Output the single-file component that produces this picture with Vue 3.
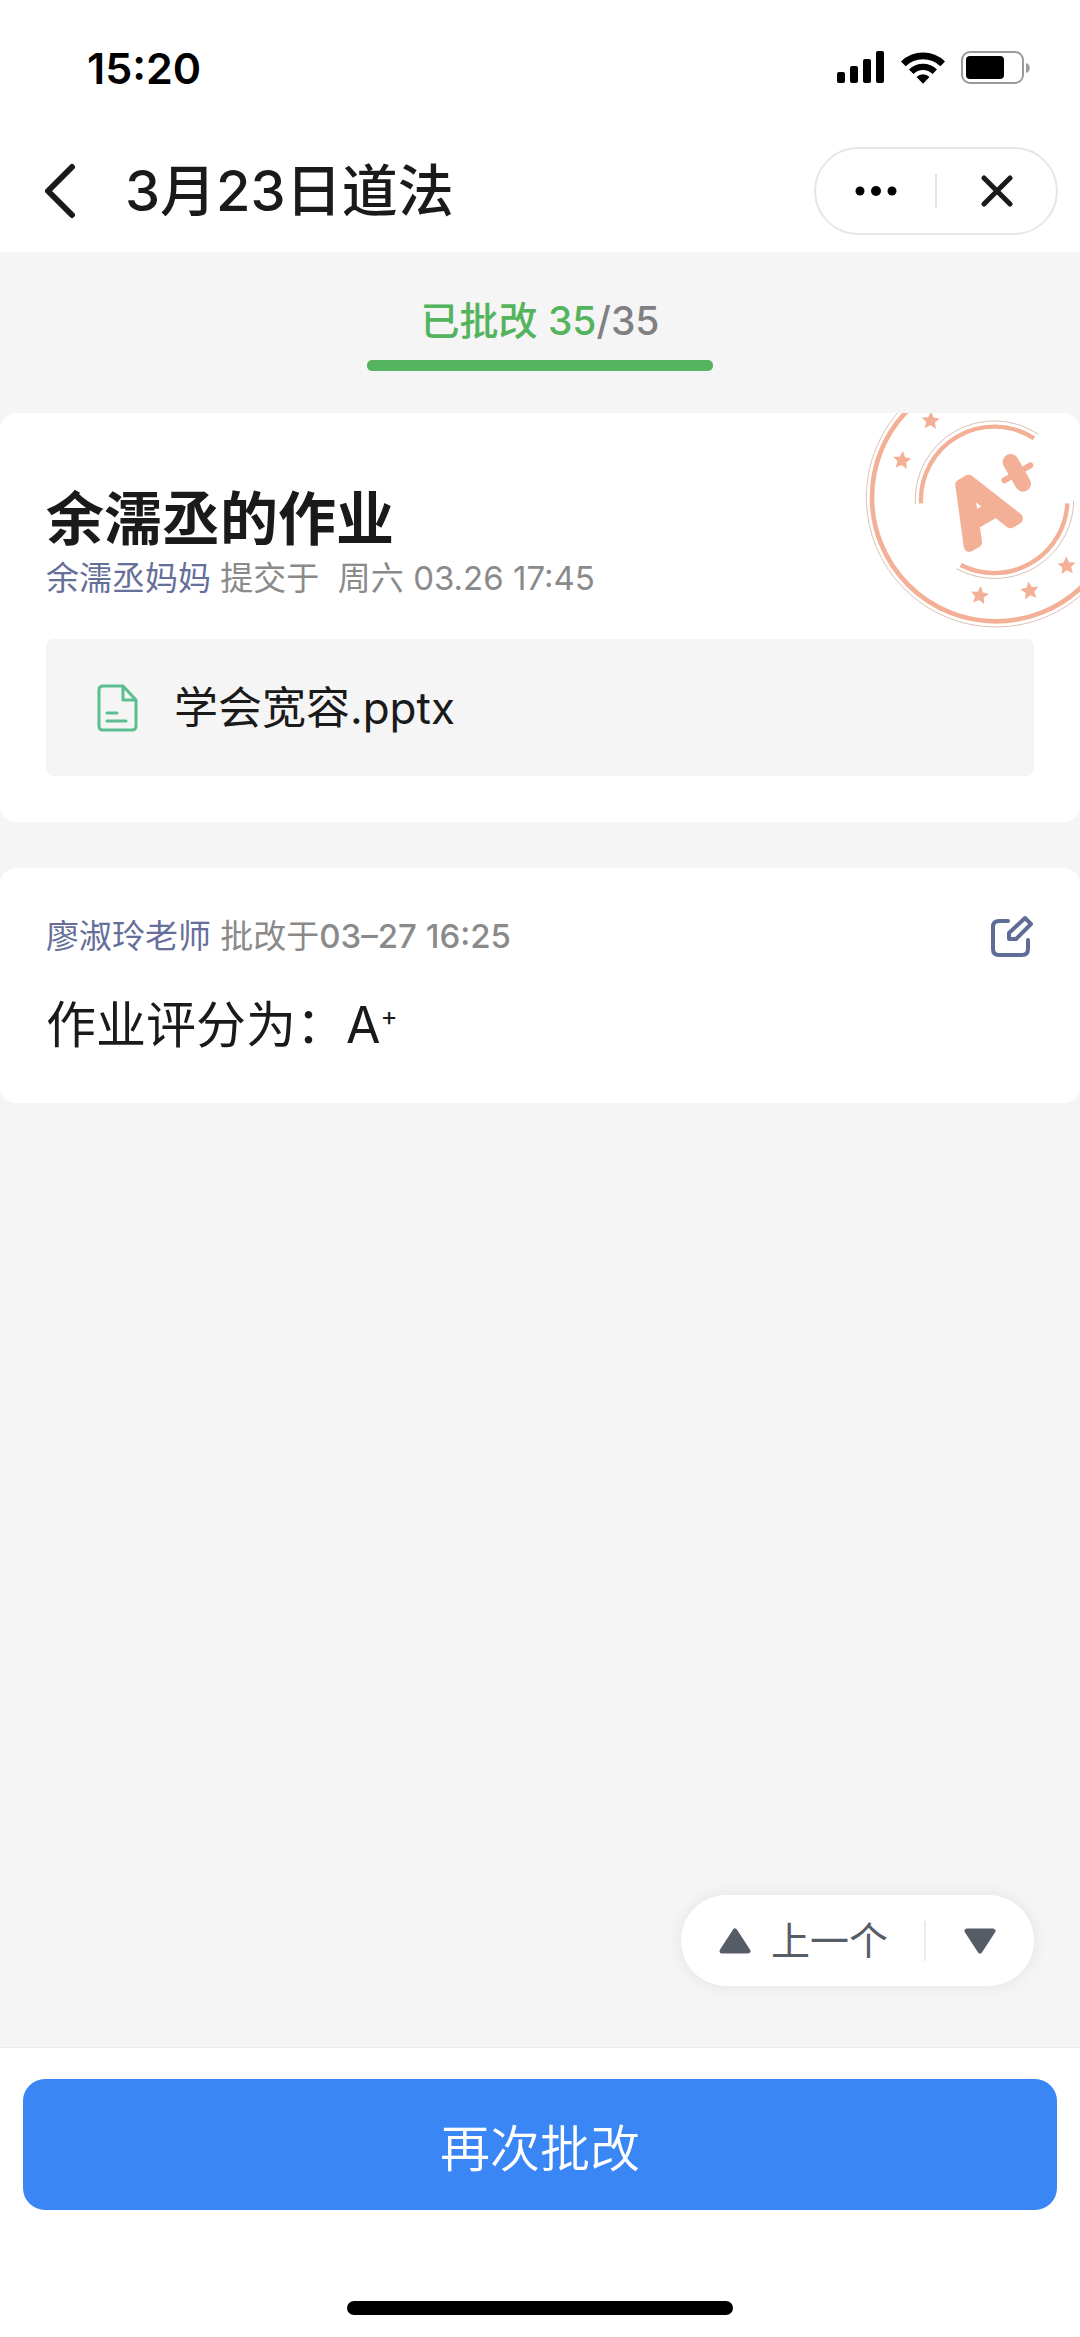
<script setup>
import { ref } from 'vue'

const graded = ref(35)
const total = ref(35)

const stars = [
  { x: 272, y: 92, r: 3 },
  { x: 186, y: 211, r: 6 },
  { x: 419, y: 616, r: 8 },
  { x: 569, y: 602, r: -8 },
  { x: 680, y: 527, r: -4 },
]
</script>

<template>
  <div class="page">
    <header class="top">
      <div class="status">
        <span class="clock">15:20</span>
        <div class="status-icons">
          <svg width="48" height="34" viewBox="0 0 48 34" aria-hidden="true">
            <rect x="0" y="21" width="8" height="11" rx="2" />
            <rect x="13" y="15" width="8" height="17" rx="2" />
            <rect x="26" y="8" width="8" height="24" rx="2" />
            <rect x="39" y="0" width="8" height="32" rx="2" />
          </svg>
          <svg width="46" height="34" viewBox="0 0 46 34" aria-hidden="true">
            <path d="M1 10.500A31.500 31.500 0 0 1 45 10.500L40.300 15.200A25 25 0 0 0 5.700 15.200Z" />
            <path d="M9 18.500A20 20 0 0 1 37 18.500L32.500 23A13.500 13.500 0 0 0 13.500 23Z" />
            <path d="M16.500 26A9.200 9.200 0 0 1 29.500 26L23 32.700Z" />
          </svg>
          <svg width="70" height="34" viewBox="0 0 70 34" aria-hidden="true">
            <rect x="1" y="1" width="61" height="31" rx="8" fill="none" stroke="#9b9b9b" stroke-width="2" />
            <rect x="5" y="5" width="38" height="23" rx="4" />
            <path d="M65 12C70 13 70 21 65 22Z" fill="#9b9b9b" />
          </svg>
        </div>
      </div>
      <div class="nav">
        <button class="back" type="button" aria-label="返回">
          <svg width="32" height="56" viewBox="0 0 32 56" aria-hidden="true">
            <path d="M28 4L4 28L28 52" fill="none" stroke="#1a1a1a" stroke-width="6" stroke-linecap="round" stroke-linejoin="round" />
          </svg>
        </button>
        <h1 class="nav-title">3月23日道法</h1>
        <div class="capsule">
          <button type="button" aria-label="更多">
            <svg width="42" height="12" viewBox="0 0 42 12" aria-hidden="true">
              <circle cx="5" cy="6" r="4.500" />
              <circle cx="21" cy="6" r="5" />
              <circle cx="37" cy="6" r="4.500" />
            </svg>
          </button>
          <button type="button" aria-label="关闭">
            <svg width="32" height="32" viewBox="0 0 32 32" aria-hidden="true">
              <path d="M3 3L29 29M29 3L3 29" fill="none" stroke="#1a1a1a" stroke-width="5" stroke-linecap="round" />
            </svg>
          </button>
        </div>
      </div>
    </header>

    <main class="content">
      <section class="progress">
        <p class="progress-text"><span class="done">已批改 {{ graded }}</span>/{{ total }}</p>
        <div class="bar"><div class="bar-fill" :style="{ width: (graded / total) * 100 + '%' }"></div></div>
      </section>

      <section class="card">
        <svg class="stamp" viewBox="72 69 648 648" aria-hidden="true">
          <g fill="none" stroke="#f3b097">
            <circle cx="468" cy="322" r="389" stroke-width="3" stroke="#e3bfb2" />
            <circle cx="468" cy="322" r="372" stroke-width="14" />
            <path d="M226 342A237 237 0 0 1 595 133" stroke-width="3" stroke="#dcbdb2" />
            <path d="M243 340A220 220 0 0 1 582 145" stroke-width="13" />
            <path d="M701 333A237 237 0 0 1 350 536" stroke-width="3" stroke="#dcbdb2" />
            <path d="M682 340A220 220 0 0 1 362 525" stroke-width="13" />
            <path d="M512 216L549 281" stroke-width="48" stroke-linecap="round" />
            <path d="M493 271L571 226" stroke-width="18" stroke-linecap="round" />
          </g>
          <text class="stamp-grade" transform="translate(460 427) rotate(-30)" text-anchor="middle">A</text>
          <path
            v-for="s in stars"
            :key="s.x"
            fill="#f3b097"
            d="M0-28L8-10L27-8L13 5L17 24L0 14L-17 24L-13 5L-27-8L-8-10Z"
            :transform="`translate(${s.x} ${s.y}) rotate(${s.r})`"
          />
        </svg>
        <h2 class="card-title">余濡丞的作业</h2>
        <p class="meta"><span class="who">余濡丞妈妈</span> 提交于&nbsp; 周六 03.26 17:45</p>
        <a class="file" href="#">
          <svg width="42" height="48" viewBox="0 0 42 48" fill="none" stroke="#5cbd8f" stroke-width="3" stroke-linecap="round" stroke-linejoin="round" aria-hidden="true">
            <path d="M26 2H6Q2 2 2 6V42Q2 46 6 46H35Q39 46 39 42V16L26 2V16H39" />
            <path d="M10 29H20M10 37H29" />
          </svg>
          <span class="file-name">学会宽容.pptx</span>
        </a>
      </section>

      <section class="card">
        <div class="review-head">
          <p class="meta"><span class="who">廖淑玲老师</span> 批改于<time class="strong">03–27 16:25</time></p>
          <button class="edit" type="button" aria-label="编辑">
            <svg width="44" height="44" viewBox="0 0 44 44" fill="none" stroke="#5f6c96" stroke-width="4" stroke-linecap="round" stroke-linejoin="round" aria-hidden="true">
              <path d="M18 7H9Q3 7 3 13V35Q3 41 9 41H32Q38 41 38 35V26" />
              <path d="M35 4L41 10L26 25H19V19Z" />
            </svg>
          </button>
        </div>
        <p class="score">作业评分为：A<sup>+</sup></p>
      </section>

      <div class="pager">
        <button class="prev" type="button">
          <svg width="32" height="26" viewBox="0 0 32 26" aria-hidden="true">
            <path d="M16 3L29 23H3Z" fill="#565d66" stroke="#565d66" stroke-width="5" stroke-linejoin="round" />
          </svg>
          <span class="prev-label">上一个</span>
        </button>
        <button class="next" type="button" aria-label="下一个">
          <svg width="32" height="26" viewBox="0 0 32 26" aria-hidden="true">
            <path d="M16 23L29 3H3Z" fill="#565d66" stroke="#565d66" stroke-width="5" stroke-linejoin="round" />
          </svg>
        </button>
      </div>
    </main>

    <footer class="footer">
      <button class="primary" type="button">再次批改</button>
      <div class="home"></div>
    </footer>
  </div>
</template>

<style>
body {
  margin: 0;
}
</style>

<style scoped>
.page {
  display: flex;
  flex-direction: column;
  min-height: 100vh;
  background: #f5f5f5;
  color: #1a1a1a;
  font-family: Inter, "Noto Sans CJK SC", sans-serif;
}

h1,
h2,
p {
  margin: 0;
}

button {
  display: flex;
  align-items: center;
  justify-content: center;
  margin: 0;
  padding: 0;
  border: 0;
  background: none;
  color: inherit;
  font: inherit;
}

svg {
  display: block;
  flex: none;
}

.top {
  background: #fff;
}

.status {
  display: flex;
  align-items: center;
  justify-content: space-between;
  height: 120px;
  padding: 8px 49px 0 87px;
}

.clock {
  color: #000;
  font-size: 43px;
  font-weight: 600;
}

.status-icons {
  display: flex;
  gap: 15px;
}

.nav {
  display: flex;
  align-items: center;
  height: 122px;
  padding: 2px 22px 0 44px;
}

.nav-title {
  flex: 1;
  margin-left: 49px;
  font-size: 56px;
  font-weight: 500;
  line-height: 64px;
}

.capsule {
  display: flex;
  align-items: center;
  box-sizing: border-box;
  width: 244px;
  height: 88px;
  border: 2px solid #e6e6e6;
  border-radius: 44px;
}

.capsule button {
  flex: 1;
  height: 34px;
}

.capsule button + button {
  border-left: 2px solid #e3e3e3;
}

.content {
  display: flex;
  flex: 1;
  flex-direction: column;
}

.progress {
  display: flex;
  flex-direction: column;
  align-items: center;
  padding: 45px 0 42px;
}

.progress-text {
  color: #808082;
  font-size: 39px;
  font-weight: 500;
  line-height: 48px;
}

.done {
  color: #54b45d;
}

.bar {
  width: 32%;
  height: 11px;
  margin-top: 15px;
}

.bar-fill {
  height: 100%;
  border-radius: 5px;
  background: #54b55e;
}

.card {
  position: relative;
  overflow: hidden;
  padding: 46px;
  border-radius: 16px;
  background: #fff;
}

.card + .card {
  margin-top: 46px;
}

.stamp {
  position: absolute;
  top: 0;
  right: 0;
  width: 216px;
  height: 216px;
}

.stamp-grade {
  fill: #f3b097;
  stroke: #f3b097;
  stroke-width: 34px;
  stroke-linejoin: round;
  font-family: "Liberation Sans", sans-serif;
  font-size: 250px;
}

.card-title {
  margin-top: 28px;
  font-size: 58px;
  font-weight: 700;
  line-height: 64px;
}

.meta {
  color: #8a8a8a;
  font-size: 33px;
  font-weight: 400;
  line-height: 44px;
}

.card-title + .meta {
  margin-top: 5px;
}

.who {
  color: #666f99;
}

.strong {
  font-weight: 500;
}

.file {
  display: flex;
  align-items: center;
  gap: 35px;
  height: 137px;
  margin-top: 39px;
  padding: 0 51px;
  border-radius: 8px;
  background: #f5f5f5;
  color: #1a1a1a;
  font-size: 44px;
  text-decoration: none;
}

.file-name,
.prev-label {
  padding-bottom: 5px;
}

.review-head {
  display: flex;
  align-items: center;
  justify-content: space-between;
}

.score {
  margin-top: 36px;
  font-size: 50px;
  line-height: 63px;
}

.score sup {
  font-size: 26px;
  line-height: 0;
}

.pager {
  display: flex;
  align-items: center;
  align-self: flex-end;
  height: 91px;
  margin: auto 46px 61px 0;
  border-radius: 46px;
  background: #fff;
  box-shadow: 0 0 16px rgba(0, 0, 0, 0.08);
  color: #565d66;
}

.prev {
  gap: 20px;
  height: 40px;
  padding: 0 36px 0 38px;
  font-size: 39px;
}

.next {
  height: 40px;
  padding: 0 38px;
  border-left: 2px solid #ebebeb;
}

.footer {
  display: flex;
  flex-direction: column;
  align-items: center;
  padding: 31px 23px 22px;
  border-top: 1px solid #ececec;
  background: #fff;
}

.primary {
  width: 100%;
  height: 131px;
  border-radius: 22px;
  background: #3a86f4;
  color: #fff;
  font-size: 50px;
  font-weight: 350;
}

.home {
  width: 386px;
  height: 14px;
  margin-top: 91px;
  border-radius: 7px;
  background: #000;
}
</style>
